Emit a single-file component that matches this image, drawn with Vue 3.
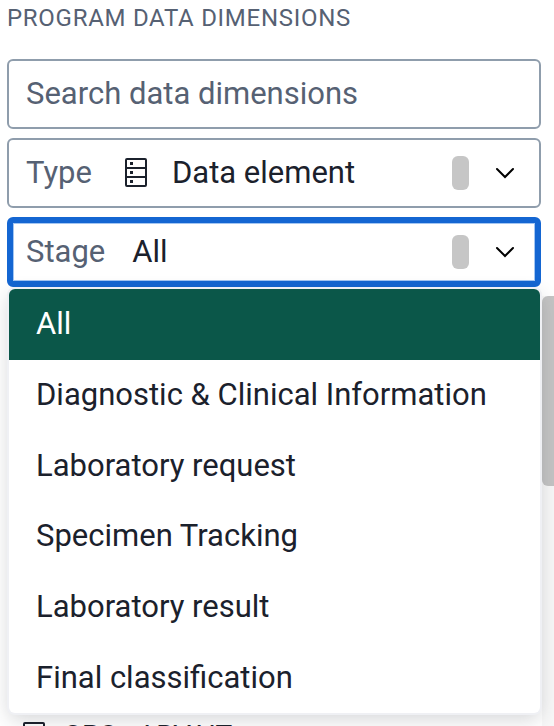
<script setup>
import { ref } from 'vue'

const search = ref('')
const type = ref('Data element')
const stages = [
  'All',
  'Diagnostic & Clinical Information',
  'Laboratory request',
  'Specimen Tracking',
  'Laboratory result',
  'Final classification',
]
const stage = ref('All')
const open = ref(true)
const dimensions = ['GPS - ARVAIT']

function choose(name) {
  stage.value = name
  open.value = false
}
</script>

<template>
  <main class="panel">
    <h2 class="title">Program data dimensions</h2>

    <div class="fields">
      <input v-model="search" class="field search" type="text" aria-label="Search data dimensions" placeholder="Search data dimensions" />

      <div class="field">
        <label class="prefix" for="type">Type</label>
        <svg class="element-icon" viewBox="0 0 24 30" aria-hidden="true">
          <rect x="2" y="1" width="20" height="27" rx="1" fill="none" stroke="#1b212c" stroke-width="2" />
          <path d="M2 10H22M2 19H22" stroke="#1b212c" stroke-width="2" />
          <path d="M6 4h3v3h-3zM6 13h3v3h-3zM6 22h3v3h-3z" fill="#1b212c" />
        </svg>
        <select id="type" v-model="type" class="value">
          <option>Data element</option>
        </select>
        <span class="pill"></span>
        <svg class="chevron" viewBox="0 0 20 12" aria-hidden="true"><path d="M2 2l8 8 8-8" /></svg>
      </div>

      <div class="stage">
        <div class="field focused">
          <label class="prefix" for="stage">Stage</label>
          <button id="stage" class="value" type="button" aria-haspopup="listbox" :aria-expanded="open" @click="open = !open">{{ stage }}</button>
          <span class="pill"></span>
          <svg class="chevron" viewBox="0 0 20 12" aria-hidden="true"><path d="M2 2l8 8 8-8" /></svg>
        </div>
        <ul v-if="open" class="menu" role="listbox" aria-label="Stage">
          <li v-for="name in stages" :key="name" class="option" :class="{ selected: name === stage }" role="option" :aria-selected="name === stage" @click="choose(name)">{{ name }}</li>
        </ul>
      </div>
    </div>

    <div class="results">
      <ul class="dimensions">
        <li v-for="item in dimensions" :key="item" class="dimension">
          <svg class="element-icon" viewBox="0 0 24 30" aria-hidden="true">
            <rect x="2" y="1" width="20" height="27" rx="1" fill="none" stroke="#1b212c" stroke-width="2" />
            <path d="M2 10H22M2 19H22" stroke="#1b212c" stroke-width="2" />
          </svg>
          <span>{{ item }}</span>
        </li>
      </ul>
      <div class="track"><div class="thumb"></div></div>
    </div>
  </main>
</template>

<style>
body {
  background: #fff;
}
</style>

<style scoped>
.panel {
  box-sizing: border-box;
  display: flex;
  flex-direction: column;
  height: 100vh;
  overflow: hidden;
  font-family: Roboto, "Liberation Sans", sans-serif;
  font-size: 31px;
  color: #1b212c;
}
.title {
  margin: 0;
  padding: 2px 7px 0;
  font-size: 24px;
  line-height: 32px;
  font-weight: 400;
  letter-spacing: 0.03em;
  text-transform: uppercase;
  color: #566173;
}
.fields {
  display: flex;
  flex-direction: column;
  gap: 9px;
  padding: 25px 13px 0 7px;
}
.field {
  box-sizing: border-box;
  display: flex;
  align-items: center;
  width: 100%;
  height: 70px;
  padding: 0 24px 0 17px;
  border: 2px solid #8f9dac;
  border-radius: 6px;
  background: #fff;
}
.search {
  padding-bottom: 1px;
  font: inherit;
  color: inherit;
  outline: none;
}
.search::placeholder {
  color: #566173;
  opacity: 1;
}
.focused {
  padding: 0 20px 0 13px;
  border: 6px solid #1466d2;
  box-shadow: inset 0 0 0 1px #a3c6f2;
}
.prefix {
  padding-bottom: 1px;
  color: #566173;
}
.element-icon {
  flex: none;
  width: 24px;
  height: 30px;
  margin-left: 32px;
}
.value {
  flex: 1;
  min-width: 0;
  margin: 0 0 0 24px;
  padding: 0 0 1px;
  border: 0;
  appearance: none;
  background: none;
  font: inherit;
  color: inherit;
  text-align: left;
  outline: none;
}
.prefix + .value {
  margin-left: 27px;
}
.pill {
  width: 17px;
  height: 34px;
  margin-right: 26px;
  border-radius: 6px;
  background: #c6c6c6;
}
.chevron {
  width: 20px;
  height: 12px;
  fill: none;
  stroke: #000;
  stroke-width: 2;
  stroke-linecap: round;
}
.stage {
  position: relative;
}
.menu {
  position: absolute;
  z-index: 2;
  top: 100%;
  left: 2px;
  right: 1px;
  display: grid;
  grid-auto-rows: 1fr;
  min-height: 424px;
  margin: 2px 0 0;
  padding: 0;
  list-style: none;
  overflow: hidden;
  border-radius: 6px;
  background: #fff;
  box-shadow: 0 0 0 2px #eff0f4, 0 6px 20px rgba(33, 41, 52, 0.2);
}
.option {
  display: flex;
  align-items: center;
  padding: 0 27px 1px;
}
.selected {
  background: #0b5749;
  color: #fff;
}
.results {
  display: flex;
  flex: 1;
  min-height: 0;
  margin-top: 9px;
}
.dimensions {
  display: flex;
  flex: 1;
  flex-direction: column;
  margin: 0;
  padding: 426px 0 0 22px;
  list-style: none;
}
.dimension {
  display: flex;
  gap: 17px;
  font-size: 28px;
  line-height: 28px;
}
.dimension .element-icon {
  margin-left: 0;
}
.track {
  width: 12px;
  background: #f8f8f8;
}
.thumb {
  height: 190px;
  border-radius: 6px 0 0 6px;
  background: #c4c4c4;
}
</style>
